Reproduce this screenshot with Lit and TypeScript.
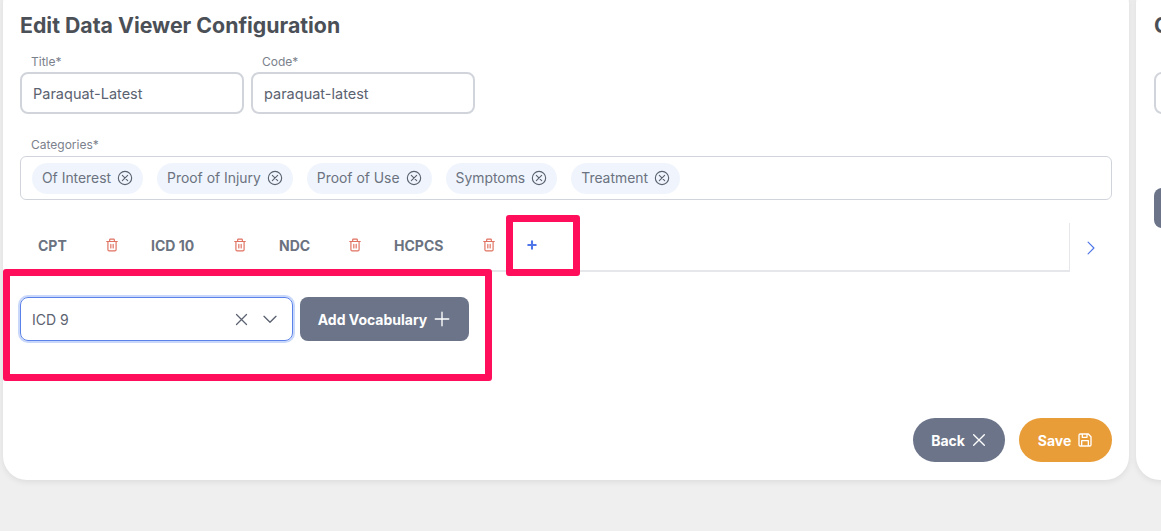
import { LitElement, css, html, svg } from "lit";
import { customElement } from "lit/decorators.js";

const chips = ["Of Interest", "Proof of Injury", "Proof of Use", "Symptoms", "Treatment"];
const tabs = [
  { name: "CPT", width: 81 },
  { name: "ICD 10", width: 96 },
  { name: "NDC", width: 83 },
  { name: "HCPCS", width: 102 },
];

const icon = (size: number, width: number, body: unknown) => html`
  <svg
    width=${size}
    height=${size}
    viewBox="0 0 24 24"
    fill="none"
    stroke="currentColor"
    stroke-width=${width}
    stroke-linecap="round"
    stroke-linejoin="round"
  >
    ${body}
  </svg>
`;

const closeCircle = svg`<circle cx="12" cy="12" r="10" /><path d="M8 8l8 8M16 8l-8 8" />`;
const trash = svg`<path d="M3 6h18M8 6V3a1 1 0 0 1 1-1h6a1 1 0 0 1 1 1v3M5 6v14a2 2 0 0 0 2 2h10a2 2 0 0 0 2-2V6M10 11v6M14 11v6" />`;
const cross = svg`<path d="M4 4l16 16M20 4L4 20" />`;
const plus = svg`<path d="M12 3v18M3 12h18" />`;
const chevronDown = svg`<path d="M3 8l9 9 9-9" />`;
const chevronRight = svg`<path d="M7 2l10 10L7 22" />`;
const save = svg`<path d="M3 5a2 2 0 0 1 2-2h12l4 4v12a2 2 0 0 1-2 2H5a2 2 0 0 1-2-2zM8 3v5h7V3M7 21v-8h10v8" />`;

@customElement("app-root")
export class AppRoot extends LitElement {
  static styles = css`
    :host {
      display: block;
      position: relative;
      width: 1161px;
      height: 531px;
      overflow: hidden;
      background: #efefef;
      font-family: Inter, "Noto Sans", sans-serif;
      color: #6b7280;
    }

    .page {
      display: flex;
      gap: 7px;
      padding-left: 3px;
      width: 1400px;
      margin-top: -20px;
    }

    .card {
      box-sizing: border-box;
      height: 500px;
      background: #fff;
      border-radius: 24px;
      box-shadow: 0 2px 6px rgba(0, 0, 0, 0.08);
      display: flex;
      flex-direction: column;
    }

    .main {
      width: 1126px;
      padding: 32px 17px 18px;
    }

    .side {
      width: 240px;
      padding: 32px 18px;
    }

    h1 {
      margin: 0;
      font-size: 21.3px;
      line-height: 26px;
      font-weight: 700;
      color: #4b5057;
    }

    .fields {
      display: flex;
      gap: 7px;
      margin-top: 16px;
    }

    .label {
      display: block;
      padding-left: 11px;
      font-size: 12px;
      line-height: 16px;
      color: #7b818c;
    }

    .field {
      box-sizing: border-box;
      width: 224px;
      height: 42px;
      margin-top: 2px;
      padding-left: 11px;
      display: flex;
      align-items: center;
      border: 2px solid #d1d5db;
      border-radius: 8px;
      font-size: 14.5px;
      color: #5b6270;
    }

    .categories {
      margin-top: 23px;
    }

    .chips {
      box-sizing: border-box;
      height: 44px;
      margin-top: 3px;
      padding: 0 11px;
      display: flex;
      align-items: center;
      gap: 14px;
      border: 1px solid #d1d5db;
      border-radius: 6px;
    }

    .chip {
      display: flex;
      align-items: center;
      gap: 6px;
      height: 31px;
      padding: 0 10px;
      border-radius: 16px;
      background: #f0f5fd;
      font-size: 13.9px;
      color: #6b7280;
    }

    .chip svg {
      color: #5b6270;
    }

    .tabs-row {
      display: flex;
      align-items: center;
      margin-top: 23px;
    }

    .tabs {
      box-sizing: border-box;
      width: 1050px;
      height: 49px;
      display: flex;
      align-items: center;
      padding: 0 0 3px 18px;
      border-bottom: 2px solid #e5e7eb;
      border-right: 1px solid #e5e7eb;
    }

    .tab {
      display: flex;
      align-items: center;
      justify-content: space-between;
      margin-right: 32px;
      font-size: 14px;
      font-weight: 700;
      color: #6b7280;
    }

    .tab:nth-child(4) {
      margin-right: 0;
    }

    .tab svg {
      color: #e0705f;
    }

    .add-tab {
      margin-left: 31px;
      display: flex;
      color: #4f76e8;
    }

    .next {
      display: flex;
      margin-left: 14px;
      color: #4f76e8;
    }

    .vocab {
      display: flex;
      gap: 7px;
      margin-top: 25px;
    }

    .select {
      box-sizing: border-box;
      width: 273px;
      height: 44px;
      padding: 0 14px 0 11px;
      display: flex;
      align-items: center;
      border: 1px solid #5b82e8;
      border-radius: 8px;
      box-shadow: 0 0 0 2px #c9d8fa;
      font-size: 14px;
      color: #5b6270;
    }

    .select span {
      flex: 1;
    }

    .select svg + svg {
      margin-left: 13px;
    }

    button {
      box-sizing: border-box;
      height: 44px;
      display: flex;
      align-items: center;
      justify-content: center;
      gap: 6px;
      border: none;
      color: #fff;
      font: 700 14px Inter, "Noto Sans", sans-serif;
      background: #6b7488;
    }

    .add {
      width: 169px;
      border-radius: 8px;
    }

    .actions {
      display: flex;
      justify-content: flex-end;
      gap: 14px;
      margin-top: auto;
    }

    .pill {
      border-radius: 22px;
      width: 92px;
    }

    .save {
      width: 93px;
      background: #e99d38;
    }

    .side .field {
      margin-top: 34px;
    }

    .side .block {
      width: 200px;
      height: 40px;
      margin-top: 74px;
      border-radius: 8px;
      background: #6b7488;
    }

    .side h1 {
      white-space: nowrap;
    }

    .mark {
      position: absolute;
      box-sizing: border-box;
      border: 7px solid #ff0f5b;
      border-radius: 3px;
      pointer-events: none;
    }

    .mark-tab {
      left: 506px;
      top: 215px;
      width: 74px;
      height: 61px;
    }

    .mark-vocab {
      left: 3px;
      top: 269px;
      width: 489px;
      height: 112px;
    }
  `;

  render() {
    return html`
      <div class="page">
        <section class="card main">
          <h1>Edit Data Viewer Configuration</h1>
          <div class="fields">
            <div>
              <span class="label">Title*</span>
              <div class="field">Paraquat-Latest</div>
            </div>
            <div>
              <span class="label">Code*</span>
              <div class="field">paraquat-latest</div>
            </div>
          </div>
          <div class="categories">
            <span class="label">Categories*</span>
            <div class="chips">
              ${chips.map((c) => html`<span class="chip">${c} ${icon(16, 1.7, closeCircle)}</span>`)}
            </div>
          </div>
          <div class="tabs-row">
            <div class="tabs">
              ${tabs.map(
                (t) => html`
                  <div class="tab" style="width: ${t.width}px">${t.name} ${icon(14, 2, trash)}</div>
                `,
              )}
              <span class="add-tab">${icon(10, 5, plus)}</span>
            </div>
            <span class="next">${icon(14, 2, chevronRight)}</span>
          </div>
          <div class="vocab">
            <div class="select">
              <span>ICD 9</span>
              ${icon(15, 2, cross)} ${icon(16, 2, chevronDown)}
            </div>
            <button class="add">Add Vocabulary ${icon(18, 1.8, plus)}</button>
          </div>
          <div class="actions">
            <button class="pill">Back ${icon(16, 2, cross)}</button>
            <button class="pill save">Save ${icon(16, 2, save)}</button>
          </div>
        </section>
        <section class="card side">
          <h1>Create</h1>
          <div class="field"></div>
          <div class="block"></div>
        </section>
      </div>
      <div class="mark mark-tab"></div>
      <div class="mark mark-vocab"></div>
    `;
  }
}

declare global {
  interface HTMLElementTagNameMap {
    "app-root": AppRoot;
  }
}
